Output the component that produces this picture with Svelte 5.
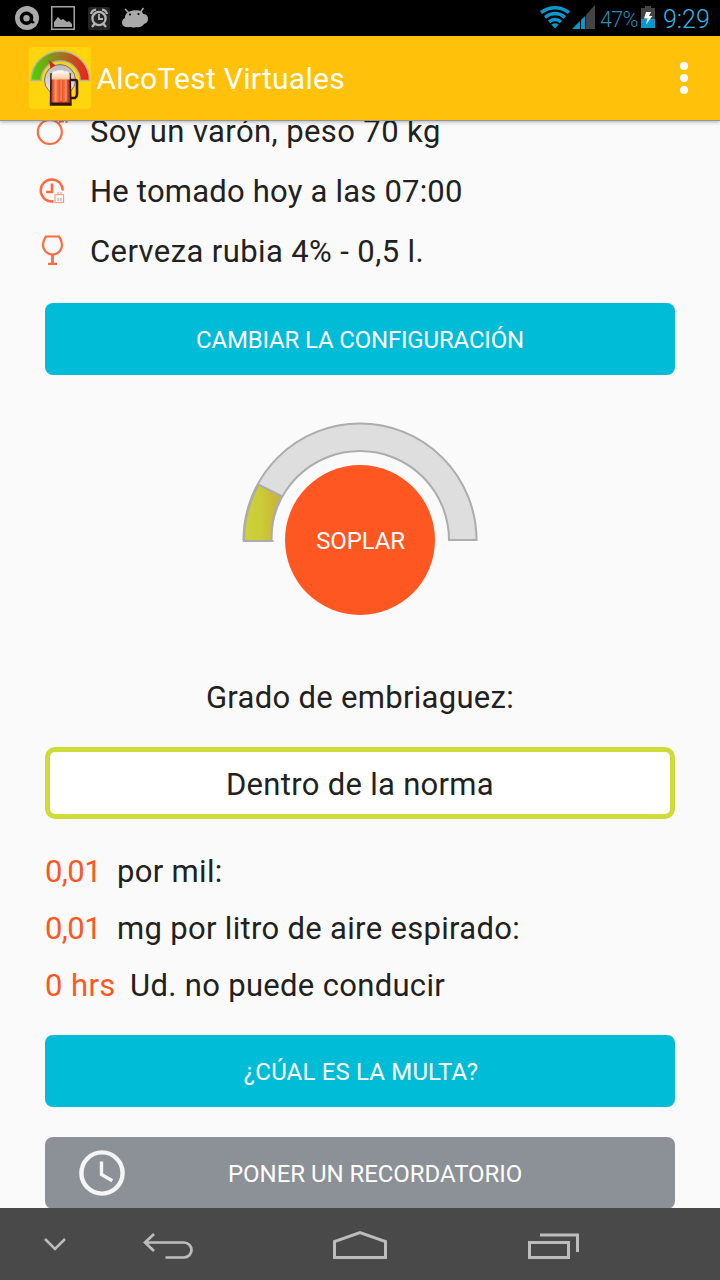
<script>
  const facts = [
    { icon: 'male', text: 'Soy un varón, peso 70 kg', ls: 0.4 },
    { icon: 'time', text: 'He tomado hoy a las 07:00', ls: 0.21 },
    { icon: 'glass', text: 'Cerveza rubia 4% - 0,5 l.', ls: 0.4 }
  ];
  const results = [
    { value: '0,01', label: 'por mil:', width: 72, ls: -0.6 },
    { value: '0,01', label: 'mg por litro de aire espirado:', width: 72, ls: -0.6 },
    { value: '0 hrs', label: 'Ud. no puede conducir', width: 85, ls: 0.4 }
  ];
</script>

<div class="screen">
  <div class="status">
    <svg class="notif" width="160" height="36" viewBox="0 0 160 36">
      <circle cx="27" cy="18" r="12" fill="#a9a9a9" />
      <g fill="none" stroke="#000">
        <circle cx="26.500" cy="18.300" r="5" stroke-width="3.600" />
        <path d="M31.300 14v6.500q0 2.500 3 1.500" stroke-width="2.200" />
      </g>
      <rect x="51.750" y="6.750" width="22.500" height="22.500" fill="none" stroke="#a4a4a4" stroke-width="1.500" />
      <path d="M54 27v-5l4-5 3 3 2-1 4 3 2-1 3 3v3z" fill="#a4a4a4" />
      <rect x="88" y="7" width="22" height="23" rx="2" fill="#242424" />
      <g fill="none" stroke="#b5b5b5" stroke-width="2.300">
        <circle cx="99" cy="18.500" r="6.600" />
        <path d="M99 14v5h4" stroke-width="1.800" />
        <path d="M91 14q1-4 5-4.400M107 14q-1-4-5-4.400M94.500 24l-2.500 3M103.500 24l2.500 3" />
      </g>
      <path d="M125 9l4 4M143.500 8l-3 4" stroke="#a9a9a9" stroke-width="1.500" />
      <path d="M122 23q0-4 3-5c-1-9 18-10 18-4q5 0 5 5 0 4-4 5-3 4-8 3-2 1-5 0-9 1-9-4z" fill="#a9a9a9" />
      <circle cx="130" cy="14.500" r="1.100" fill="#000" /><circle cx="138.500" cy="14" r="1.100" fill="#000" />
    </svg>
    <div class="sys">
      <svg width="62" height="36" viewBox="538 0 62 36">
        <g fill="none" stroke="#0898cf" stroke-width="3.400">
          <path d="M541 12.500q14-9.500 28 0" />
          <path d="M545 17.300q10-7.500 20 0" />
          <path d="M549 21.800q6-4.500 12 0" />
        </g>
        <path d="M551.300 24.500q3.700-2.300 7.400 0L555 28.500z" fill="#0898cf" />
        <path d="M572 29l8-8v8zM581 20l4-4v13h-4z" fill="#0898cf" />
        <path d="M586 15l9-10v24h-9z" fill="#444" />
      </svg>
      <span class="pct">47%</span>
      <svg class="bat" width="14" height="36" viewBox="641 0 14 36">
        <path d="M645 6h6v2h4v11h-14V8h4z" fill="#444" />
        <path d="M641 19h14v9h-14z" fill="#0898cf" />
        <path d="M646 12h5l-2 4h3.500l-6.500 8.500 1.500-6H644z" fill="#fff" />
      </svg>
      <span class="clock">9:29</span>
    </div>
  </div>

  <header>
    <svg class="logo" width="62" height="62" viewBox="29 47 62 62">
      <defs>
        <linearGradient id="dial"><stop offset="0" stop-color="#4bd500" /><stop offset=".5" stop-color="#9b7a22" /><stop offset="1" stop-color="#f51b1b" /></linearGradient>
        <linearGradient id="beer"><stop offset="0" stop-color="#b62b20" /><stop offset=".25" stop-color="#ff8858" /><stop offset=".5" stop-color="#e84520" /><stop offset=".7" stop-color="#f47042" /><stop offset="1" stop-color="#9c1d19" /></linearGradient>
        <linearGradient id="foam" x2="0" y2="1"><stop offset="0" stop-color="#fff" /><stop offset="1" stop-color="#f4c99c" /></linearGradient>
        <linearGradient id="hub" x2="0" y2="1"><stop offset="0" stop-color="#b9b9b9" /><stop offset="1" stop-color="#eee" /></linearGradient>
      </defs>
      <rect x="29" y="47" width="62" height="62" rx="4" fill="#ffd60e" />
      <path d="M31 80.500a29 29 0 0 1 58.500 0H80a19.500 19.500 0 0 0-39 0z" fill="url(#dial)" stroke="#b6b3a0" stroke-width="1.500" />
      <circle cx="60" cy="80" r="15.500" fill="url(#hub)" stroke="#777" stroke-width="1" />
      <path d="M49 60l6.500 5.500-5 3z" fill="#ce2922" />
      <path d="M70 80h5.500q1.500 0 1.500 2v12.500q0 2-2 3.500H70" fill="none" stroke="#38150e" stroke-width="2.600" />
      <path d="M51 74h19l1 31H50.500z" fill="url(#beer)" stroke="#35150e" stroke-width="1.500" />
      <path d="M55.500 80v21M61 80v21M66 80v21" stroke="#ffad72" stroke-width="1.500" opacity=".65" />
      <path d="M51 102.500h19.500v2.500H51z" fill="#35150e" />
      <path d="M51.700 74.500q1-4 4-3 2-2 4-1 3-1 5 1 4-1 5 3v5H51.700z" fill="url(#foam)" />
    </svg>
    <h1>AlcoTest Virtuales</h1>
    <svg class="more" width="8" height="32" viewBox="0 0 8 32" fill="#fff"><circle cx="4" cy="4" r="4" /><circle cx="4" cy="16" r="4" /><circle cx="4" cy="28" r="4" /></svg>
  </header>

  <main>
    <div class="facts">
      {#each facts as f}
        <div class="fact">
          <svg width="45" height="60" viewBox="0 0 45 60" fill="none" stroke="#ff6a42" stroke-width="2">
            {#if f.icon === 'male'}
              <circle cx="19.800" cy="31" r="12" stroke-width="2.200" /><path d="M28 23l7-7M29 20.500h5M36.500 18v4" />
            {:else if f.icon === 'time'}
              <path d="M32.700 29.500A11 11 0 1 0 23.500 40.300" stroke-width="2.400" />
              <path d="M22 22.500v8.500h-6" stroke-width="2.600" />
              <path d="M25 33.500h8.500v8H25zM28 31v3M31 31v3M28 37v3M31 37v3" stroke-width="1.200" opacity=".65" />
            {:else}
              <path d="M16 15.500h13q3 4 3 8.500a9.500 9.500 0 0 1-19 0q0-4.500 3-8.500zM18 42.800h9" stroke-width="2.200" /><path d="M22.500 34v8" stroke-width="2.800" />
            {/if}
          </svg>
          <span style:letter-spacing="{f.ls}px">{f.text}</span>
        </div>
      {/each}
    </div>
    <button class="btn cyan"><span class="b1">CAMBIAR LA CONFIGURACIÓN</span></button>

    <div class="gauge">
      <svg width="240" height="122" viewBox="240 420 240 122">
        <defs><linearGradient id="level"><stop offset="0" stop-color="#cdd338" /><stop offset=".45" stop-color="#cbcb37" /><stop offset="1" stop-color="#c9b034" /></linearGradient></defs>
        <path d="M243.500 540a116.500 116.500 0 0 1 233 0H449a89 89 0 0 0-178 0z" fill="#dedede" stroke="#acacac" stroke-width="2" />
        <path d="M244 541a116.500 116.500 0 0 1 14.500-56.500L281.500 496Q271.500 512 271.500 541z" fill="url(#level)" />
        <path d="M273.500 541H244a116.500 116.500 0 0 1 14.500-56.500L281.500 496Q271.500 513 271.500 541" fill="none" stroke="#acacac" stroke-width="2" />
      </svg>
      <button class="blow"><span>SOPLAR</span></button>
    </div>

    <div class="title">Grado de embriaguez:</div>
    <div class="state">Dentro de la norma</div>

    <div class="results">
      {#each results as r}
        <div class="result"><em style:width="{r.width}px" style:letter-spacing="{r.ls}px">{r.value}</em><span>{r.label}</span></div>
      {/each}
    </div>
    <button class="btn cyan fine"><span class="b2">¿CÚAL ES LA MULTA?</span></button>
    <button class="btn gray">
      <svg width="46" height="46" viewBox="0 0 46 46" fill="none" stroke="#f4f5f5"><circle cx="23" cy="23" r="20.600" stroke-width="4.400" /><path d="M22.500 11.500v13l10.800 6.200" stroke-width="3.400" /></svg>
      <span class="b3">PONER UN RECORDATORIO</span>
    </button>
  </main>

  <nav>
    <svg width="720" height="72" viewBox="0 1208 720 72" fill="none" stroke="#bdbdbd" stroke-width="3">
      <path d="M45 1239l10 10 10-10" stroke-width="2.500" />
      <path d="M154 1234l-9 8.500 9 8.500M145 1242.500h39a7.500 7.500 0 0 1 0 15h-18.500" stroke-width="2.700" />
      <path d="M334.500 1257.500v-16L360 1232.500l25.500 9v16z" />
      <path d="M529.500 1242.500h39v15h-39zM540 1235h37.500v17" />
    </svg>
  </nav>
</div>

<style>
  :global(body) { margin: 0; }
  .screen { width: 720px; height: 1280px; display: flex; flex-direction: column; overflow: hidden; background: #fafafa; color: #212121; font-family: Roboto, sans-serif; font-size: 31px; font-weight: 400; }
  svg { display: block; flex: none; }
  span, h1, .title, .state { white-space: nowrap; }
  .status { height: 36px; flex: none; background: #000; display: flex; justify-content: space-between; color: #33b5e5; }
  .sys { display: flex; width: 182px; line-height: 39px; }
  .pct { font-size: 21.500px; color: #2a8fb8; width: 41px; letter-spacing: -.7px; font-weight: 300; }
  .clock { font-size: 25px; margin-left: 8px; font-weight: 300; }
  header { height: 84px; flex: none; display: flex; align-items: center; box-sizing: border-box; padding: 0 32px 0 29px; background: #ffc109; color: #fff; box-shadow: 0 1px 0 #969696, 0 2px 4px rgba(0,0,0,.3); position: relative; }
  h1 { margin: 0 auto 0 5.500px; font-size: 30px; font-weight: 400; letter-spacing: .28px; }
  main { flex: 1; min-height: 0; overflow: hidden; padding: 0 45px; }
  .facts { margin-top: -19px; margin-left: -15px; margin-bottom: 22px; }
  .fact { height: 60px; display: flex; align-items: center; }
  .fact span { margin-left: 15px; }
  button { border: 0; padding: 0; margin: 0; font: inherit; color: #fff; }
  .btn { width: 630px; height: 72px; border-radius: 8px; display: flex; justify-content: center; align-items: center; font-size: 24px; }
  button span { padding-top: 2px; }
  .b1 { letter-spacing: -.17px; }
  .b2 { letter-spacing: .17px; padding-left: 2px; }
  .b3 { letter-spacing: -.04px; }
  .cyan { background: #00bcd7; }
  .gray { background: #8c9097; margin-top: 30px; justify-content: flex-start; }
  .gray svg { margin-left: 34px; margin-right: 103px; }
  .gauge { height: 195px; padding-top: 45px; display: flex; flex-direction: column; align-items: center; }
  .blow { width: 150px; height: 150px; border-radius: 50%; background: #ff5722; margin-top: -77px; font-size: 24px; letter-spacing: -.15px; position: relative; display: flex; align-items: center; justify-content: center; }
  .blow span { padding-left: 1px; }
  .title { height: 60px; margin-top: 52px; line-height: 62px; text-align: center; letter-spacing: .3px; }
  .state { height: 72px; line-height: 66px; margin-top: 20px; box-sizing: border-box; border: 5px solid #cddc39; border-radius: 10px; background: #fff; text-align: center; letter-spacing: .3px; }
  .results { margin-top: 24px; }
  .result { height: 57px; display: flex; align-items: center; letter-spacing: .32px; }
  em { font-style: normal; color: #ff5722; flex: none; white-space: nowrap; }
  .fine { margin-top: 21px; }
  nav { height: 72px; flex: none; background: #49494a; }
</style>
